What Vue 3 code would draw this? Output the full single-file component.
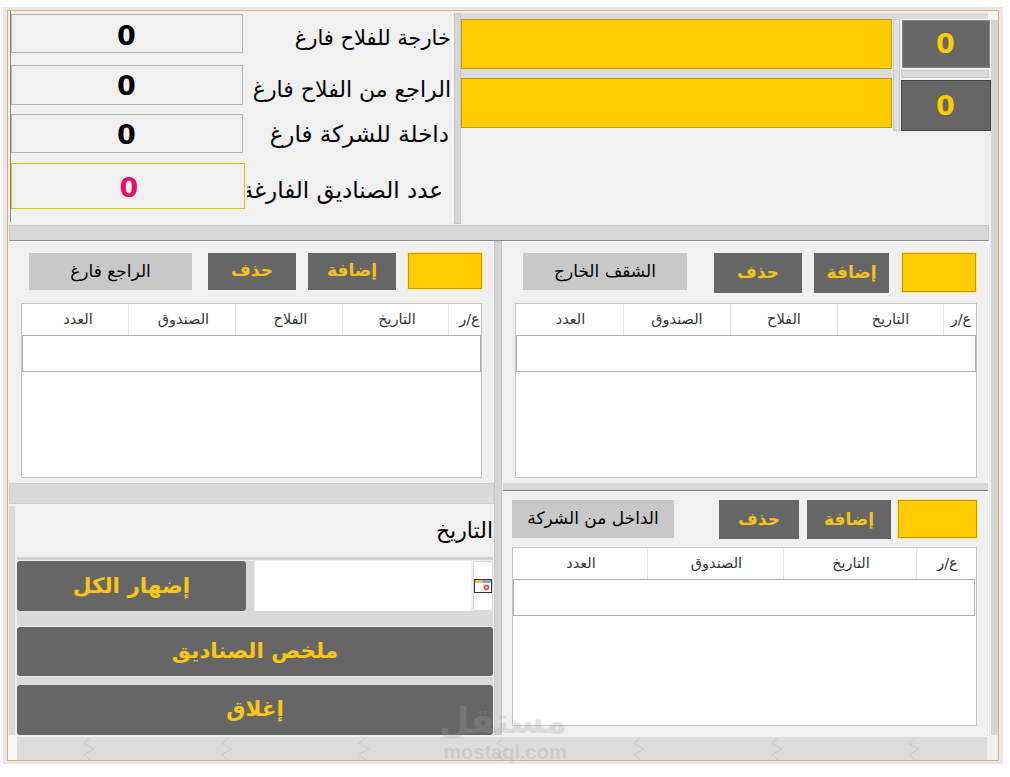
<script setup>
const colsFour = ['ع/ر', 'التاريخ', 'الفلاح', 'الصندوق', 'العدد']
const colsThree = ['ع/ر', 'التاريخ', 'الصندوق', 'العدد']
const zigzags = [1, 2, 3, 4, 5, 6, 7]
</script>

<template>
  <div class="page">
    <div class="halo">
      <div class="form">
        <div class="main">
          <div class="content">
            <div class="top">
              <div class="totals">
                <div class="total r1"><div class="box">0</div><div class="lbl l1">خارجة للفلاح فارغ</div></div>
                <div class="total r2"><div class="box">0</div><div class="lbl l2">الراجع من الفلاح فارغ</div></div>
                <div class="total r3"><div class="box">0</div><div class="lbl l3">داخلة للشركة فارغ</div></div>
                <div class="total r4"><div class="box sum">0</div><div class="lbl l4">عدد الصناديق الفارغة</div></div>
              </div>
              <div class="vsplit tall"></div>
              <div class="headline">
                <div class="topbar"></div>
                <div class="headrows">
                  <div class="yellows">
                    <div class="ybar"></div>
                    <div class="ygap"></div>
                    <div class="ybar"></div>
                  </div>
                  <div class="vsplit short"></div>
                  <div class="counts">
                    <div class="count c1">0</div>
                    <div class="cgap"></div>
                    <div class="count c2">0</div>
                  </div>
                </div>
              </div>
            </div>
            <div class="hbar"></div>
            <div class="lower">
              <div class="leftcol">
                <section class="panel pa">
                  <div class="tools">
                    <div class="tag">الراجع فارغ</div>
                    <div class="act del">حذف</div>
                    <div class="act add">إضافة</div>
                    <div class="field"></div>
                  </div>
                  <div class="table">
                    <div class="thead four"><span v-for="c in colsFour" :key="c">{{ c }}</span></div>
                    <div class="row"></div>
                  </div>
                </section>
                <div class="divider"></div>
                <div class="datebox">
                  <div class="strip"></div>
                  <div class="dateinner">
                    <div class="datelabel">التاريخ</div>
                    <div class="thin"></div>
                    <div class="daterow">
                      <div class="cmd showall">إضهار الكل</div>
                      <div class="minisplit"></div>
                      <div class="dateinput"></div>
                      <div class="calbtn">
                        <svg width="18" height="14" viewBox="0 0 18 14">
                          <rect x="0.5" y="0.5" width="17" height="13" fill="#fff" stroke="#333" />
                          <rect x="1" y="1" width="8" height="3" fill="#e6c060" />
                          <rect x="9" y="1" width="8" height="3" fill="#8aa8c8" />
                          <rect x="9" y="5" width="7" height="7" fill="#f0e4e4" />
                          <circle cx="12.5" cy="8.5" r="2" fill="none" stroke="#d8404a" stroke-width="1.4" />
                        </svg>
                      </div>
                    </div>
                    <div class="gapbar g1"></div>
                    <div class="cmd summary">ملخص الصناديق</div>
                    <div class="gapbar g2"></div>
                    <div class="cmd close">إغلاق</div>
                  </div>
                </div>
              </div>
              <div class="vsplit center"></div>
              <div class="rightcol">
                <section class="panel pb">
                  <div class="tools">
                    <div class="tag">الشقف الخارج</div>
                    <div class="act del">حذف</div>
                    <div class="act add">إضافة</div>
                    <div class="field"></div>
                  </div>
                  <div class="table">
                    <div class="thead four"><span v-for="c in colsFour" :key="c">{{ c }}</span></div>
                    <div class="row"></div>
                  </div>
                </section>
                <div class="rsplit"></div>
                <section class="panel pc">
                  <div class="tools">
                    <div class="tag">الداخل من الشركة</div>
                    <div class="act del">حذف</div>
                    <div class="act add">إضافة</div>
                    <div class="field"></div>
                  </div>
                  <div class="table">
                    <div class="thead three"><span v-for="c in colsThree" :key="c">{{ c }}</span></div>
                    <div class="row"></div>
                  </div>
                </section>
              </div>
            </div>
          </div>
          <div class="edge">
            <div class="corner"></div>
            <div class="edgebar"></div>
          </div>
        </div>
        <div class="footer">
          <div class="cornerb"></div>
          <div class="scroll">
            <svg v-for="z in zigzags" :key="z" width="12" height="22" viewBox="0 0 12 22">
              <polyline points="7,0 1,5.5 11,11 1,16.5 7,22" fill="none" stroke="#c8c8c8" />
            </svg>
          </div>
        </div>
      </div>
    </div>
    <div class="mark">
      <div class="markar">مستقل</div>
      <div class="markla">mostaql.com</div>
    </div>
  </div>
</template>

<style scoped>
.page {
  position: relative;
  width: 1010px;
  height: 777px;
  background: #fff;
  padding: 7px 0 0 3px;
  box-sizing: border-box;
  overflow: hidden;
  font-family: "DejaVu Sans", sans-serif;
  color: #000;
}
.halo {
  width: 1000px;
  height: 757px;
  background: #e6e6f6;
  padding: 3px 4px 3px 4px;
  box-sizing: border-box;
}
.form {
  width: 992px;
  height: 751px;
  border: 1px solid #e8b062;
  box-sizing: border-box;
  background: #f0f0f0;
  display: flex;
  flex-direction: column;
}
.main { display: flex; height: 724px; }
.content { width: 983px; display: flex; flex-direction: column; }
.top { height: 214px; display: flex; }
.totals {
  width: 443px;
  height: 211px;
  margin-left: 2px;
  box-sizing: border-box;
  padding-top: 3px;
  border-right: 1px solid #fff;
  border-left: 1px solid #888;
}
.total { display: flex; }
.box {
  width: 232px;
  height: 39px;
  box-sizing: border-box;
  border: 1px solid #b4b4b4;
  background: #f0f0f0;
  font-weight: 700;
  font-size: 27px;
  line-height: 41px;
  padding-right: 1px;
  text-align: center;
  flex: none;
}
.r2 { margin-top: 12px; }
.r2 .box { height: 40px; line-height: 40px; }
.r3 { margin-top: 9px; }
.r3 .box { line-height: 40px; }
.r4 { margin-top: 10px; }
.box.sum {
  width: 234px;
  height: 46px;
  border-color: #d8c800;
  color: #ee0a62;
  line-height: 48px;
  padding: 0 0 0 2px;
}
.lbl {
  flex: 1;
  min-width: 0;
  height: 30px;
  line-height: 30px;
  direction: rtl;
  white-space: nowrap;
  overflow: hidden;
  text-align: right;
}
.l1 { font-size: 21px; margin: 9px 0 0; padding-right: 1px; }
.l2 { font-size: 22px; margin: 10px 0 0; padding-right: 1px; }
.l3 { font-size: 23px; margin: 5px 0 0; padding-right: 3px; }
.l4 { font-size: 23px; margin: 12px 0 0 2px; padding-right: 9px; }
.vsplit {
  width: 7px;
  flex: none;
  box-sizing: border-box;
  background: #d6d6d6;
  border: 1px solid #c8c8c8;
}
.tall { height: 211px; margin-top: 2px; margin-left: 1px; }
.short { height: 112px; margin-left: 1px; background: #e0e0e0; }
.headline { flex: 1; min-width: 0; }
.topbar { height: 6px; margin-top: 2px; background: #dcdcdc; width: 528px; }
.headrows { display: flex; }
.yellows { width: 433px; }
.ybar {
  height: 50px;
  background: #ffcc00;
  border: 1px solid #b89c10;
  box-sizing: border-box;
}
.ygap { height: 9px; background: #dcdcdc; }
.counts { width: 91px; margin-left: 1px; }
.count {
  background: #666;
  color: #ffcc00;
  font-weight: 700;
  font-size: 27px;
  text-align: center;
  box-sizing: border-box;
}
.c1 { width: 88px; height: 48px; margin: 1px 0 0 1px; line-height: 46px; border: 1px solid #888; }
.cgap { height: 8px; margin: 2px 2px 0 0; background: #dcdcdc; border: 1px solid #c8c8c8; box-sizing: border-box; }
.c2 { width: 90px; height: 51px; margin-top: 2px; line-height: 50px; border: 1px solid #444; }
.hbar {
  height: 16px;
  margin-left: 1px;
  width: 980px;
  box-sizing: border-box;
  background: #dadada;
  border: 1px solid #c8c8c8;
  border-bottom: 1px solid #8c8c8c;
}
.lower { height: 494px; display: flex; }
.leftcol { width: 485px; margin-left: 1px; flex: none; display: flex; flex-direction: column; }
.center { height: 494px; width: 8px; margin-right: 1px; }
.rightcol { width: 486px; flex: none; display: flex; flex-direction: column; }
.panel { box-sizing: border-box; box-shadow: inset 0 1px #fff, inset -1px 0 #fff; }
.pa { height: 241px; padding: 12px 0 0 20px; }
.pb { height: 242px; padding: 12px 0 0 20px; }
.pc { height: 244px; padding: 9px 0 0 9px; }
.tools { display: flex; align-items: flex-start; height: 41px; }
.tag {
  background: #c8c8c8;
  height: 37px;
  width: 163px;
  line-height: 36px;
  text-align: center;
  direction: rtl;
  font-size: 17px;
}
.act {
  background: #666;
  color: #f4c21c;
  height: 37px;
  line-height: 35px;
  text-align: center;
  direction: rtl;
  font-weight: 700;
  font-size: 17px;
}
.field {
  height: 36px;
  width: 74px;
  background: #ffcc00;
  border: 1px solid #b89c10;
  box-sizing: border-box;
  box-shadow: 0 0 1px 1px #ffe98a;
}
.pa .del { width: 88px; margin-left: 16px; }
.pa .add { width: 88px; margin-left: 12px; }
.pa .field { margin-left: 12px; }
.pb .tag { width: 164px; }
.pb .del { width: 88px; height: 40px; line-height: 38px; margin-left: 27px; }
.pb .add { width: 75px; height: 40px; line-height: 38px; margin-left: 12px; }
.pb .field { height: 39px; margin-left: 13px; }
.pc .tag { width: 162px; height: 38px; }
.pc .del { width: 80px; height: 39px; margin-left: 45px; line-height: 38px; }
.pc .add { width: 84px; height: 39px; margin-left: 8px; line-height: 38px; }
.pc .field { width: 79px; height: 38px; margin-left: 7px; }
.table {
  box-sizing: border-box;
  background: #fff;
  border: 1px solid #c4c4c4;
  margin-top: 9px;
  font-size: 14.5px;
  color: #333;
}
.pa .table { width: 461px; height: 175px; margin-left: -8px; }
.pb .table { width: 462px; height: 175px; margin-left: -8px; }
.pc .table { width: 465px; height: 179px; margin-left: 0; margin-top: 6px; }
.thead { display: grid; height: 31px; direction: rtl; }
.four { grid-template-columns: 33px 106px 107px 107px 1fr; }
.three { grid-template-columns: 60px 133px 136px 1fr; }
.thead span {
  text-align: center;
  line-height: 30px;
  white-space: nowrap;
  border-left: 1px solid #e6e6e6;
}
.thead span:last-child { border-left: none; }
.pa .thead span { padding-left: 3px; }
.pa .thead span:first-child { padding-left: 9px; }
.pa .thead span:last-child { padding-left: 6px; }
.pb .thead span:first-child { padding-left: 2px; }
.pb .thead span:last-child { padding-left: 2px; }
.pc .thead span { padding-left: 2px; }
.row {
  height: 37px;
  box-sizing: border-box;
  border: 1px solid #adadad;
  background: #fff;
}
.pc .row { margin-right: 1px; }
.divider {
  height: 21px;
  margin-top: 1px;
  background: #dadada;
  border: 1px solid #cfcfcf;
  box-sizing: border-box;
}
.datebox { flex: 1; display: flex; min-height: 0; }
.strip { width: 6px; margin-top: 2px; background: #dadada; flex: none; }
.dateinner { flex: 1; min-width: 0; padding: 0 1px 0 2px; display: flex; flex-direction: column; }
.datelabel {
  height: 53px;
  line-height: 53px;
  direction: rtl;
  font-size: 22px;
  white-space: nowrap;
}
.thin { height: 3px; background: #d2d2d2; }
.daterow { display: flex; height: 51px; margin-top: 1px; }
.cmd {
  background: #666;
  color: #f9c713;
  font-weight: 700;
  font-size: 21.5px;
  text-align: center;
  direction: rtl;
  border-radius: 3px;
  white-space: nowrap;
}
.showall { width: 229px; height: 50px; line-height: 50px; flex: none; }
.minisplit { width: 8px; background: #d8d8d8; flex: none; margin-right: 1px; }
.dateinput { width: 216px; background: #fff; flex: none; }
.calbtn {
  width: 20px;
  height: 50px;
  box-sizing: border-box;
  margin-left: 2px;
  background: #fff;
  border: 1px solid #d8d8d8;
  border-radius: 3px;
  display: flex;
  align-items: center;
  justify-content: center;
  flex: none;
}
.calbtn svg { margin-left: -1px; }
.gapbar { background: #dadada; }
.g1 { height: 15px; flex: none; }
.g2 { height: 8px; margin: 1px 0 0; flex: none; }
.summary { height: 49px; line-height: 47px; margin-top: 1px; flex: none; }
.close { height: 50px; line-height: 48px; flex: none; }
.rsplit {
  height: 8px;
  width: 485px;
  box-sizing: border-box;
  background: #d8d8d8;
  border-bottom: 1px solid #777;
}
.edge { width: 7px; flex: none; display: flex; flex-direction: column; }
.corner { height: 9px; background: #f6f6f6; margin-left: -3px; }
.edgebar { flex: 1; background: #d4d4d4; }
.footer { flex: 1; display: flex; margin-top: 2px; min-height: 0; }
.cornerb { width: 9px; background: #f6f6f6; flex: none; margin-top: -2px; }
.scroll {
  width: 970px;
  background: #dcdcdc;
  display: flex;
  align-items: center;
  gap: 125.5px;
  padding-left: 66px;
  box-sizing: border-box;
  overflow: hidden;
}
.mark {
  position: absolute;
  left: 443px;
  top: 700px;
  width: 124px;
  text-align: center;
  color: rgba(162, 162, 162, 0.3);
  font-weight: 700;
  pointer-events: none;
}
.markar { font-size: 35px; line-height: 42px; height: 42px; direction: rtl; white-space: nowrap; }
.markla { font-family: "Liberation Sans", sans-serif; font-size: 20px; line-height: 20px; white-space: nowrap; }
</style>
